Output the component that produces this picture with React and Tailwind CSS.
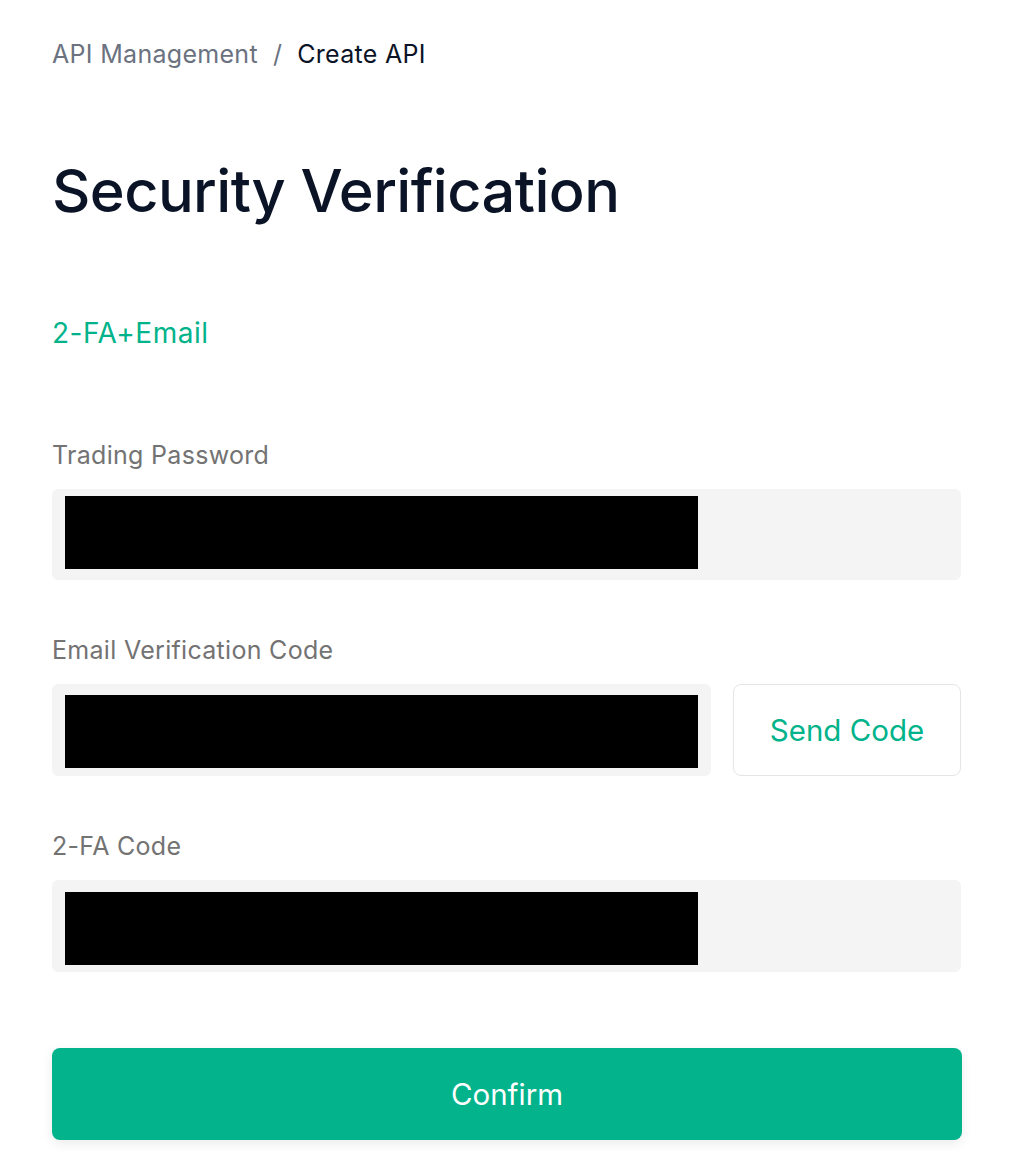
export default function App() {
  return (
    <div
      className="min-h-screen bg-white px-[52px] pt-[38px] pb-10"
      style={{ fontFamily: "Inter, 'Noto Sans', sans-serif" }}
    >
      <div className="flex items-center text-[25px] leading-[32px] tracking-[0.3px]">
        <span className="text-[#6b7280]">API Management</span>
        <span className="mx-[15px] text-[#6b7280]">/</span>
        <span className="text-[#0b1426]">Create API</span>
      </div>

      <h1 className="mt-[84px] text-[59.5px] leading-[72px] font-medium tracking-[-0.6px] text-[#0b1426]">
        Security Verification
      </h1>

      <div className="mt-[90px] text-[28px] leading-[34px] tracking-[0.5px] text-[#00b38a]">
        2-FA+Email
      </div>

      <form className="mt-[90px]">
        <label className="block text-[25px] leading-[30px] tracking-[0.3px] text-[#737373]">
          Trading Password
        </label>
        <div className="mt-[19px] h-[91px] w-[909px] rounded-md bg-[#f4f4f4] px-[13px] py-[7px]">
          <div className="h-[73px] w-[633px] bg-black" />
        </div>

        <label className="mt-[55px] block text-[25px] leading-[30px] tracking-[0.3px] text-[#737373]">
          Email Verification Code
        </label>
        <div className="mt-[19px] flex gap-[22px]">
          <div className="h-[92px] w-[659px] rounded-md bg-[#f4f4f4] px-[13px] py-[11px]">
            <div className="h-[73px] w-[633px] bg-black" />
          </div>
          <button
            type="button"
            className="h-[92px] w-[228px] rounded-lg border border-[#e5e5e5] bg-white text-[29.5px] text-[#00b38a]"
          >
            Send Code
          </button>
        </div>

        <label className="mt-[55px] block text-[25px] leading-[30px] tracking-[0.3px] text-[#737373]">
          2-FA Code
        </label>
        <div className="mt-[19px] h-[92px] w-[909px] rounded-md bg-[#f4f4f4] px-[13px] py-[12px]">
          <div className="h-[73px] w-[633px] bg-black" />
        </div>

        <button
          type="submit"
          className="mt-[76px] h-[92px] w-[910px] rounded-lg bg-[#02b38c] text-[29.5px] text-white shadow-[0_4px_12px_rgba(0,0,0,0.08)]"
        >
          Confirm
        </button>
      </form>
    </div>
  );
}
